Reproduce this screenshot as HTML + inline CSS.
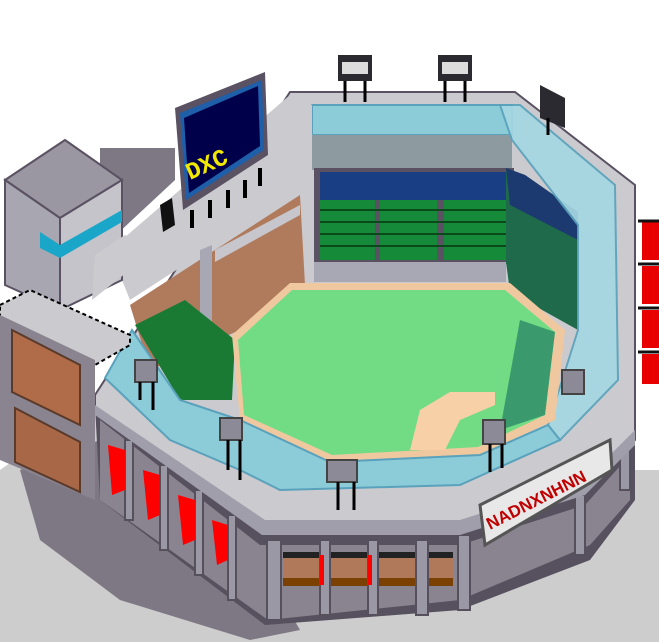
<!DOCTYPE html><html><head><style>html,body{margin:0;padding:0;background:#fff}svg{display:block}</style></head><body>
<svg width="659" height="642" viewBox="0 0 659 642" xmlns="http://www.w3.org/2000/svg">
<!-- ground -->
<polygon points="0,470 100,400 400,470 659,470 659,642 0,642" fill="#cdcdcd"/>
<polygon points="20,470 100,440 260,560 300,630 250,640 120,600 40,540" fill="#7e7884"/>
<!-- facade lower dark -->
<polygon points="95,405 265,530 460,530 585,490 635,440 635,500 590,560 460,610 265,625 100,500" fill="#57505e"/>
<polygon points="100,420 260,545 460,545 585,505 630,455 630,500 590,545 460,600 268,620 100,500" fill="#8a8490"/>
<rect x="283" y="555" width="170" height="28" fill="#b07a5a"/>
<rect x="283" y="578" width="170" height="8" fill="#7a4004"/>
<rect x="283" y="552" width="170" height="6" fill="#222"/>
<g fill="#9a98a4" stroke="#55505c" stroke-width="2">
<rect x="267" y="540" width="14" height="80"/><rect x="320" y="540" width="10" height="75"/><rect x="368" y="540" width="10" height="75"/><rect x="416" y="540" width="12" height="75"/><rect x="458" y="535" width="12" height="75"/>
<rect x="125" y="440" width="8" height="80"/><rect x="160" y="465" width="8" height="85"/><rect x="195" y="490" width="8" height="85"/><rect x="228" y="515" width="8" height="85"/><rect x="575" y="495" width="10" height="60"/><rect x="620" y="430" width="10" height="60"/>
</g>
<g fill="#f00"><polygon points="108,445 125,450 125,490 112,495"/><polygon points="143,470 160,475 160,515 148,520"/><polygon points="178,495 195,500 195,540 183,545"/><polygon points="212,520 228,525 228,560 217,565"/><rect x="320" y="555" width="4" height="30"/><rect x="368" y="555" width="4" height="30"/></g>
<!-- roof ring -->
<polygon points="95,395 290,92 515,92 635,185 635,440 585,490 460,530 265,530 95,410" fill="#cbcbcf" stroke="#5a5262" stroke-width="2"/>
<polygon points="95,405 265,520 460,520 585,480 635,430 635,445 585,495 460,535 262,535 95,415" fill="#a09eaa"/>
<!-- sign -->
<polygon points="480,505 610,440 612,470 485,545" fill="#e8e8e8" stroke="#555" stroke-width="3"/>
<text x="490" y="530" font-family="Liberation Sans,sans-serif" font-size="17" font-weight="bold" fill="#c00000" transform="rotate(-27 490 530)">NADNXNHNN</text>
<!-- top interior -->
<rect x="312" y="105" width="200" height="30" fill="#8ccbd8" stroke="#5aa2bc" stroke-width="2"/>
<rect x="312" y="135" width="200" height="35" fill="#8d9aa0"/>
<rect x="314" y="168" width="200" height="96" fill="#5a5262"/>
<rect x="320" y="172" width="55" height="88" fill="#158a38"/><rect x="380" y="172" width="57" height="88" fill="#158a38"/><rect x="444" y="172" width="62" height="88" fill="#158a38"/>
<rect x="320" y="172" width="186" height="28" fill="#1a3e84"/>
<g stroke="#0a4a1a" stroke-width="2"><line x1="320" y1="210" x2="506" y2="210"/><line x1="320" y1="222" x2="506" y2="222"/><line x1="320" y1="234" x2="506" y2="234"/><line x1="320" y1="246" x2="506" y2="246"/></g>
<rect x="314" y="262" width="192" height="20" fill="#a8a8b4"/>
<!-- right stands -->
<polygon points="506,168 525,175 578,212 578,330 510,292 506,262" fill="#1e6a4a"/>
<polygon points="506,168 525,175 578,212 578,240 510,205" fill="#1c3a70"/>
<!-- right glass -->
<polygon points="500,105 520,105 615,185 618,380 560,440 548,425 578,330 578,225 512,140" fill="#a6d8e2" stroke="#5aa2bc" stroke-width="2" opacity="0.92"/>
<!-- left brown walls & roof -->
<polygon points="110,250 290,95 312,105 312,140 300,190 130,300" fill="#cbcbcf"/>
<polygon points="130,305 300,195 305,285 240,330 150,370" fill="#b07a5c"/>
<polygon points="215,250 300,205 300,215 215,262" fill="#c6c6cc"/>
<polygon points="200,250 212,245 212,340 200,345" fill="#a8a8b4"/>
<polygon points="135,325 185,300 235,340 232,400 180,400" fill="#1a7a34"/>
<!-- field -->
<polygon points="232,335 290,283 510,283 565,330 555,420 480,455 330,462 240,420" fill="#f0c8a0"/>
<polygon points="238,340 292,290 505,290 555,332 545,415 478,447 332,455 244,415" fill="#72dc84"/>
<polygon points="520,320 555,332 545,415 500,430" fill="#3a9a6e"/>
<polygon points="410,450 420,410 450,392 495,392 495,405 460,420 445,450" fill="#f8d0a8"/>
<!-- front & left glass -->
<polygon points="240,420 330,462 480,455 548,425 560,440 460,485 280,490 240,470" fill="#8ccbd8" stroke="#5aa2bc" stroke-width="2"/>
<polygon points="105,378 132,330 180,400 240,420 240,470 170,440" fill="#8ccbd8" stroke="#5aa2bc" stroke-width="2"/>
<!-- lamps -->
<g fill="#8c8a96" stroke="#444" stroke-width="2">
<rect x="135" y="360" width="22" height="22"/><rect x="220" y="418" width="22" height="22"/><rect x="327" y="460" width="30" height="22"/><rect x="483" y="420" width="22" height="24"/><rect x="562" y="370" width="22" height="24"/></g>
<g stroke="#000" stroke-width="3"><line x1="338" y1="482" x2="338" y2="510"/><line x1="354" y1="482" x2="354" y2="510"/><line x1="228" y1="440" x2="228" y2="470"/><line x1="240" y1="440" x2="240" y2="480"/><line x1="490" y1="444" x2="490" y2="472"/><line x1="502" y1="444" x2="502" y2="468"/><line x1="140" y1="382" x2="140" y2="400"/><line x1="153" y1="382" x2="153" y2="410"/></g>
<!-- light towers -->
<g fill="#2a2a30"><rect x="338" y="55" width="34" height="26"/><rect x="438" y="55" width="34" height="26"/><polygon points="540,85 565,98 565,128 540,118"/></g>
<g fill="#ddd"><rect x="342" y="62" width="26" height="12"/><rect x="442" y="62" width="26" height="12"/></g>
<g stroke="#000" stroke-width="3"><line x1="345" y1="81" x2="345" y2="102"/><line x1="365" y1="81" x2="365" y2="102"/><line x1="445" y1="81" x2="445" y2="102"/><line x1="465" y1="81" x2="465" y2="102"/><line x1="548" y1="118" x2="548" y2="135"/></g>
<!-- dark block behind tower -->
<polygon points="100,148 175,148 175,180 100,250" fill="#7e7884"/>
<!-- scoreboard -->
<polygon points="175,108 265,72 268,155 183,210" fill="#5a5262"/>
<polygon points="180,113 262,80 264,150 186,200" fill="#1f5ea8"/>
<polygon points="184,118 258,86 260,146 189,193" fill="#00004a"/>
<text x="190" y="180" font-family="Liberation Mono,monospace" font-size="24" font-weight="bold" fill="#f0e800" transform="rotate(-24 190 180)">DXC</text>
<g stroke="#000" stroke-width="4"><line x1="192" y1="210" x2="192" y2="228"/><line x1="210" y1="200" x2="210" y2="218"/><line x1="228" y1="190" x2="228" y2="208"/><line x1="245" y1="180" x2="245" y2="198"/><line x1="260" y1="168" x2="260" y2="186"/></g>
<polygon points="160,205 172,198 175,225 163,232" fill="#111"/>
<!-- left tower building -->
<polygon points="5,180 65,140 122,180 60,218" fill="#9a96a2" stroke="#5a5262" stroke-width="2"/>
<polygon points="5,180 60,218 60,310 5,285" fill="#a8a6b0" stroke="#5a5262" stroke-width="2"/>
<polygon points="60,218 122,180 122,280 60,310" fill="#c4c4ca" stroke="#5a5262" stroke-width="2"/>
<polygon points="40,232 60,245 122,210 122,222 60,258 40,248" fill="#1aa6c8"/>
<!-- walkway left -->
<polygon points="0,305 30,290 130,335 130,345 95,365 0,320" fill="#cbcbcf" stroke="#000" stroke-width="2" stroke-dasharray="4 3"/>
<polygon points="92,300 155,250 125,235 95,255" fill="#cbcbcf"/>
<!-- lower left building -->
<polygon points="0,315 95,360 95,500 0,460" fill="#8a8490"/>
<polygon points="12,330 80,365 80,425 12,392" fill="#b06c48" stroke="#5a3a2a" stroke-width="2"/>
<polygon points="15,408 80,442 80,492 15,462" fill="#a86848" stroke="#5a3a2a" stroke-width="2"/>
<!-- red banners right -->
<g fill="#e80000"><rect x="642" y="222" width="17" height="38"/><rect x="642" y="266" width="17" height="38"/><rect x="642" y="310" width="17" height="38"/><rect x="642" y="354" width="17" height="30"/></g>
<g stroke="#111" stroke-width="3"><line x1="638" y1="221" x2="659" y2="221"/><line x1="638" y1="264" x2="659" y2="264"/><line x1="638" y1="308" x2="659" y2="308"/><line x1="638" y1="352" x2="659" y2="352"/></g>
</svg>
</body></html>
